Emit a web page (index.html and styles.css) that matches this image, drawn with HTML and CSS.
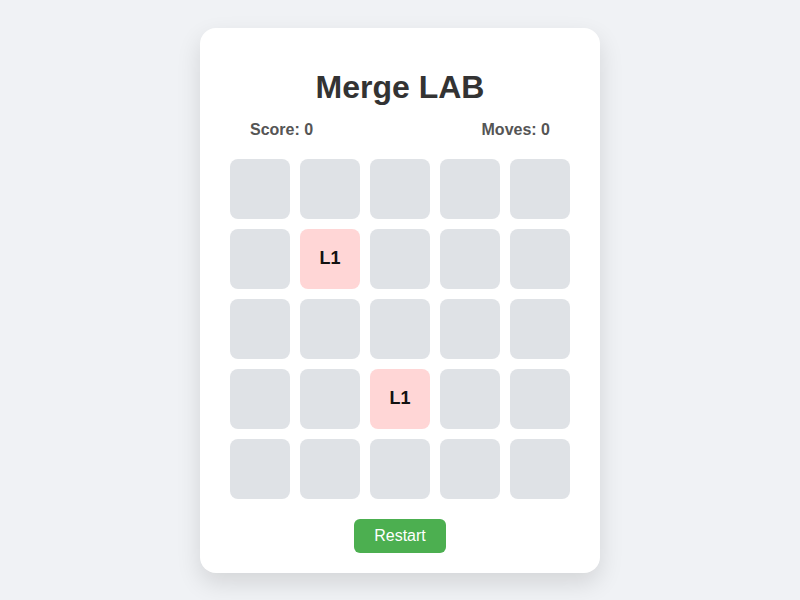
FILE: index.html
```html
<!DOCTYPE html>
<html>
<head>
<meta charset="utf-8">
<link rel="stylesheet" href="styles.css">
</head>
<body>
<div class="card">
  <h1 class="title">Merge LAB</h1>
  <div class="stats">
    <span>Score: 0</span>
    <span>Moves: 0</span>
  </div>
  <div class="grid">
    <div class="cell"></div><div class="cell"></div><div class="cell"></div><div class="cell"></div><div class="cell"></div>
    <div class="cell"></div><div class="cell l1">L1</div><div class="cell"></div><div class="cell"></div><div class="cell"></div>
    <div class="cell"></div><div class="cell"></div><div class="cell"></div><div class="cell"></div><div class="cell"></div>
    <div class="cell"></div><div class="cell"></div><div class="cell l1">L1</div><div class="cell"></div><div class="cell"></div>
    <div class="cell"></div><div class="cell"></div><div class="cell"></div><div class="cell"></div><div class="cell"></div>
  </div>
  <div class="actions">
    <button class="restart">Restart</button>
  </div>
</div>
</body>
</html>
```

FILE: styles.css
```css
html, body {
  margin: 0;
  padding: 0;
}
body {
  background: #f0f2f5;
  font-family: "Liberation Sans", Arial, sans-serif;
  min-height: 100vh;
  display: flex;
  align-items: center;
  justify-content: center;
}
.card {
  width: 400px;
  box-sizing: border-box;
  background: #ffffff;
  border-radius: 16px;
  padding: 20px 30px;
  box-shadow: 0 10px 25px rgba(0, 0, 0, 0.12);
}
.title {
  font-size: 32px;
  font-weight: bold;
  color: #333333;
  text-align: center;
  margin: 21px 0 15px;
}
.stats {
  display: flex;
  justify-content: space-between;
  padding: 0 20px;
  font-size: 16px;
  font-weight: bold;
  color: #555555;
  margin-bottom: 20px;
}
.grid {
  display: grid;
  grid-template-columns: repeat(5, 60px);
  grid-auto-rows: 60px;
  gap: 10px;
}
.cell {
  background: #dfe2e6;
  border-radius: 8px;
  display: flex;
  align-items: center;
  justify-content: center;
  font-size: 18px;
  font-weight: bold;
  color: #111111;
}
.cell.l1 {
  background: #ffd6d6;
}
.actions {
  display: flex;
  justify-content: center;
  margin-top: 20px;
}
.restart {
  font-family: "Liberation Sans", Arial, sans-serif;
  font-size: 16px;
  color: #ffffff;
  background: #4caf50;
  border: none;
  border-radius: 6px;
  padding: 8px 20px;
  line-height: normal;
}
```
